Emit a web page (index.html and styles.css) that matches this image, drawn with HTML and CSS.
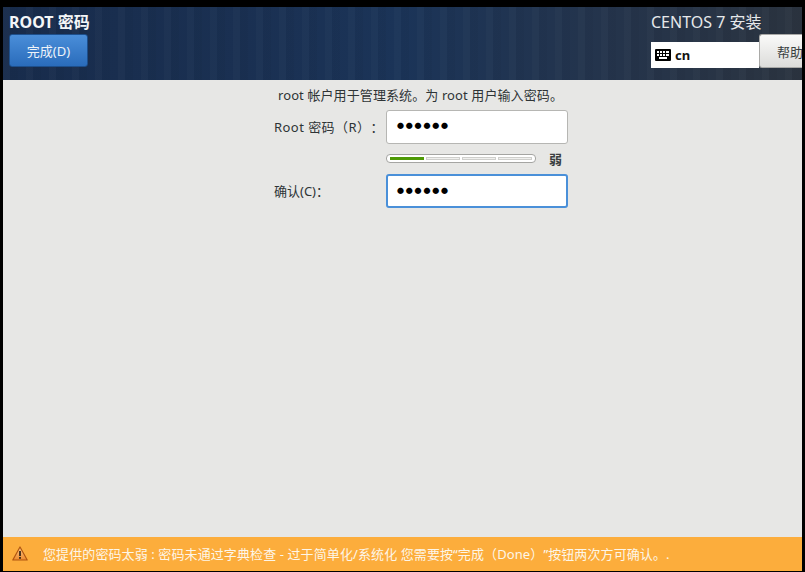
FILE: index.html
```html
<!DOCTYPE html>
<html lang="zh-CN">
<head>
<meta charset="utf-8">
<title>ROOT 密码</title>
<link rel="stylesheet" href="styles.css">
</head>
<body>
<div class="window">
  <header class="header">
    <div class="header-left">
      <h1 class="title">ROOT 密码</h1>
      <button class="done">完成(D)</button>
    </div>
    <div class="header-right">
      <div class="product">CENTOS 7 安装</div>
      <div class="header-controls">
        <div class="layout">
          <svg class="kbd" width="16" height="12" viewBox="0 0 16 12">
            <rect x="0" y="0" width="16" height="12" rx="1" fill="#000"/>
            <g fill="#fff">
              <rect x="2" y="2" width="2" height="2"/><rect x="5" y="2" width="2" height="2"/><rect x="8" y="2" width="2" height="2"/><rect x="11" y="2" width="3" height="2"/>
              <rect x="2" y="5" width="2" height="2"/><rect x="5" y="5" width="2" height="2"/><rect x="8" y="5" width="2" height="2"/><rect x="11" y="5" width="3" height="2"/>
              <rect x="4" y="8" width="8" height="2"/>
            </g>
          </svg>
          <span>cn</span>
        </div>
        <button class="help">帮助</button>
      </div>
    </div>
  </header>
  <main class="content">
    <p class="intro">root 帐户用于管理系统。为 root 用户输入密码。</p>
    <div class="form">
      <label class="label label-root">Root 密码（R）：</label>
      <div class="input">●●●●●●</div>
      <span class="spacer"></span>
      <div class="strength-row">
        <div class="meter">
          <span class="seg on"></span><span class="seg"></span><span class="seg"></span><span class="seg"></span>
        </div>
        <span class="weak">弱</span>
      </div>
      <label class="label">确认(C)：</label>
      <div class="input focus">●●●●●●</div>
    </div>
  </main>
  <footer class="warning">
    <svg class="warn-icon" width="16" height="15" viewBox="0 0 16 15">
      <defs>
        <linearGradient id="warnfill" x1="0" y1="0" x2="0" y2="1">
          <stop offset="0" stop-color="#fbc98c"/>
          <stop offset="1" stop-color="#ee8a2c"/>
        </linearGradient>
      </defs>
      <path d="M8 1 L15.2 14 H0.8 Z" fill="url(#warnfill)" stroke="#b0560f" stroke-width="1.2" stroke-linejoin="round"/>
      <rect x="7.1" y="5" width="1.8" height="5" fill="#3a2a1a"/>
      <rect x="7.1" y="11" width="1.8" height="1.8" fill="#3a2a1a"/>
    </svg>
    <span class="warn-text">您提供的密码太弱 : 密码未通过字典检查 - 过于简单化/系统化 您需要按“完成（Done）”按钮两次方可确认。.</span>
  </footer>
</div>
</body>
</html>
```
FILE: styles.css
```css
* { box-sizing: border-box; }
html, body { margin: 0; height: 100%; background: #000; overflow: hidden; }
body {
  padding: 7px 3px 1px 3px;
  font-family: "Noto Sans", "Noto Sans CJK SC", sans-serif;
  font-size: 13px;
  color: #2e3436;
  text-spacing-trim: space-all;
}
.window {
  height: 564px;
  display: flex;
  flex-direction: column;
  background: #e7e7e5;
}
.header {
  height: 73px;
  flex: none;
  display: flex;
  justify-content: space-between;
  color: #fff;
  background:
    repeating-linear-gradient(90deg, rgba(255,255,255,0.018) 0 7px, rgba(0,0,0,0.03) 7px 15px, rgba(255,255,255,0) 15px 23px),
    linear-gradient(90deg, #182c4c 0%, #1a3052 30%, #1b3458 50%, #24344c 75%, #2b3440 100%);
}
.header-left { padding: 7px 0 0 6px; }
.title {
  margin: 0 0 3px;
  font-size: 16px;
  line-height: 17px;
  font-weight: bold;
  color: #f4f6f8;
}
.done {
  display: block;
  width: 79px;
  height: 33px;
  padding: 0 0 1px;
  font: 13px "Noto Sans", "Noto Sans CJK SC", sans-serif;
  color: #eef3f9;
  border: 1px solid #1d4f8c;
  border-radius: 3px;
  background: linear-gradient(#4a8ed9, #2a6cbb);
}
.header-right { width: 151px; padding-top: 7px; overflow: hidden; }
.product {
  font-size: 16px;
  line-height: 17px;
  color: #e6e8ea;
}
.header-controls { display: flex; margin-top: 3px; height: 36px; }
.layout {
  flex: none;
  width: 108px;
  height: 26px;
  margin-top: 8px;
  display: flex;
  align-items: center;
  gap: 4px;
  padding: 0 0 1px 4px;
  background: #fff;
  color: #111;
  font-weight: bold;
  font-size: 13px;
}
.help {
  flex: none;
  width: 60px;
  height: 34px;
  padding: 0 0 0 17px;
  text-align: left;
  font: 13px "Noto Sans", "Noto Sans CJK SC", sans-serif;
  color: #3a3f41;
  border: 1px solid #a9a9a7;
  border-right: 0;
  border-radius: 3px 0 0 3px;
  background: linear-gradient(#fafaf9, #dcdcda);
  white-space: nowrap;
}
.content { flex: 1; display: flex; flex-direction: column; align-items: center; }
.intro {
  margin: 6px 0 0 36px;
  line-height: 18px;
  letter-spacing: 0.1px;
  white-space: nowrap;
}
.form {
  display: grid;
  grid-template-columns: 112px 182px;
  margin: 6px 0 0 37px;
  align-items: center;
}
.label { white-space: nowrap; padding-bottom: 2px; }
.label-root { letter-spacing: 0.45px; }
.input {
  height: 34px;
  background: #fff;
  border: 1px solid #b6b6b3;
  border-radius: 3px;
  padding-left: 10px;
  line-height: 30px;
  font-size: 7px;
  letter-spacing: 1.8px;
  color: #000;
}
.input.focus { border: 2px solid #4a90d9; padding-left: 9px; height: 34px; }
.strength-row {
  display: flex;
  align-items: center;
  height: 30px;
  gap: 13px;
  padding-bottom: 2px;
}
.meter {
  width: 150px;
  height: 9px;
  display: flex;
  gap: 2px;
  padding: 2px 3px;
  background: #fff;
  border: 1px solid #a5a5a2;
  border-radius: 4px;
}
.seg { flex: 1; border: 1px solid #cfcfcc; background: #f0f0ee; }
.seg.on { background: #4e9a06; border-color: #4e9a06; }
.weak { font-weight: bold; color: #3a3f41; }
.warning {
  height: 34px;
  flex: none;
  display: flex;
  align-items: center;
  gap: 15px;
  padding: 0 0 2px 9px;
  background: #fcad3c;
  color: #fdf6e8;
  white-space: nowrap;
}
.warn-text { letter-spacing: 0.1px; }
```
